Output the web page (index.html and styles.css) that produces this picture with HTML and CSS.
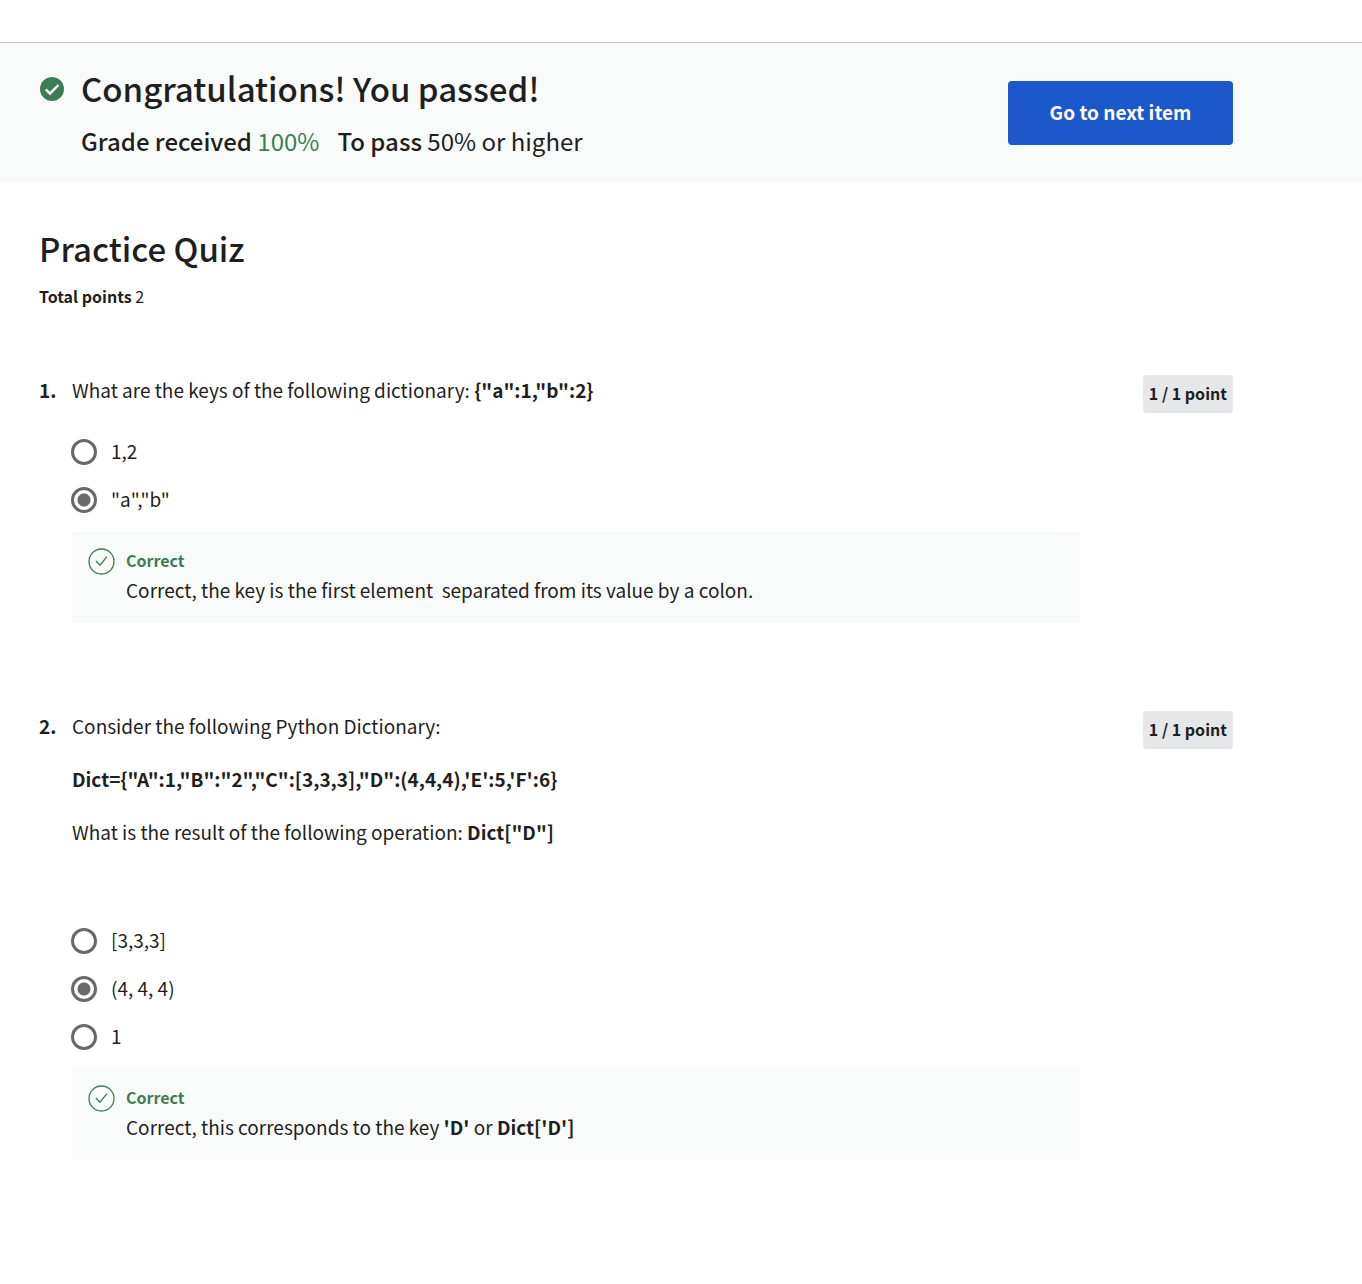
FILE: index.html
```html
<!DOCTYPE html>
<html lang="en">
<head>
<meta charset="utf-8">
<meta name="viewport" content="width=device-width, initial-scale=1">
<title>Practice Quiz</title>
<link rel="stylesheet" href="styles.css">
</head>
<body>
<header class="result">
  <svg class="result-icon" viewBox="0 0 24 24" aria-hidden="true">
    <circle cx="12" cy="12" r="12" fill="#3d7d54"/>
    <path d="M5.8 12.4l4.2 4.2 8.4-8.6" fill="none" stroke="#fff" stroke-width="2.4"/>
  </svg>
  <div class="result-text">
    <h1 class="title">Congratulations! You passed!</h1>
    <p class="grades">
      <span><strong>Grade received</strong> <span class="score">100%</span></span>
      <span><strong>To pass</strong> 50% or higher</span>
    </p>
  </div>
  <button class="next" type="button">Go to next item</button>
</header>
<main class="quiz">
  <h2 class="title">Practice Quiz</h2>
  <p class="total"><strong>Total points</strong> 2</p>

  <section class="question">
    <span class="number">1.</span>
    <div class="body">
      <div class="prompt">
        <p>What are the keys of the following dictionary: <strong>{"a":1,"b":2}</strong></p>
      </div>
      <div class="options">
        <label class="option"><input type="radio" name="q1"><span>1,2</span></label>
        <label class="option"><input type="radio" name="q1" checked><span>"a","b"</span></label>
      </div>
      <div class="feedback">
        <svg class="feedback-icon" viewBox="0 0 27 27" aria-hidden="true">
          <circle cx="13.5" cy="13.5" r="12.5"/>
          <path d="M7.9 13l4.1 4.2 6.9-8.6"/>
        </svg>
        <div>
          <p class="verdict">Correct</p>
          <p>Correct, the key is the first element &nbsp;separated from its value by a colon.</p>
        </div>
      </div>
    </div>
    <span class="points">1 / 1 point</span>
  </section>

  <section class="question">
    <span class="number">2.</span>
    <div class="body">
      <div class="prompt prompt-long">
        <p>Consider the following Python Dictionary:</p>
        <p><strong>Dict={"A":1,"B":"2","C":[3,3,3],"D":(4,4,4),'E':5,'F':6}</strong></p>
        <p>What is the result of the following operation: <strong>Dict["D"]</strong></p>
      </div>
      <div class="options">
        <label class="option"><input type="radio" name="q2"><span>[3,3,3]</span></label>
        <label class="option"><input type="radio" name="q2" checked><span>(4, 4, 4)</span></label>
        <label class="option"><input type="radio" name="q2"><span>1</span></label>
      </div>
      <div class="feedback">
        <svg class="feedback-icon" viewBox="0 0 27 27" aria-hidden="true">
          <circle cx="13.5" cy="13.5" r="12.5"/>
          <path d="M7.9 13l4.1 4.2 6.9-8.6"/>
        </svg>
        <div>
          <p class="verdict">Correct</p>
          <p>Correct, this corresponds to the key <strong>'D'</strong> or <strong>Dict['D']</strong></p>
        </div>
      </div>
    </div>
    <span class="points">1 / 1 point</span>
  </section>
</main>
</body>
</html>
```
FILE: styles.css
```css
* {
  box-sizing: border-box;
}

body {
  margin: 42px 0 0;
  background: #fff;
  color: #1f1f1f;
  font: 19px/30px "Source Sans Pro", "Noto Sans CJK JP", sans-serif;
}

h1,
h2,
p {
  margin: 0;
}

.title {
  font-size: 33px;
  font-weight: 500;
  line-height: 42px;
}

.result {
  display: flex;
  align-items: flex-start;
  padding: 24px 129px 24px 40px;
  border-top: 1px solid #c1c1c1;
  background: #f9fbfa;
}

.result-icon {
  width: 24px;
  height: 24px;
  margin: 10px 17px 0 0;
}

.result-text {
  flex: 1;
}

.grades {
  display: flex;
  gap: 18px;
  margin-top: 14px;
  font-size: 24px;
  line-height: 35px;
}

.grades strong {
  font-weight: 500;
}

.score {
  color: #3d7d54;
}

.next {
  width: 225px;
  height: 64px;
  margin-top: 14px;
  padding: 0 0 2px;
  border: 0;
  border-radius: 4px;
  background: #1d57cc;
  color: #fff;
  font: inherit;
  font-weight: 700;
}

.quiz {
  padding: 45px 129px 124px 39px;
}

.total {
  margin-top: 12px;
  font-size: 16px;
  line-height: 30px;
}

.question {
  display: flex;
  align-items: flex-start;
  margin-top: 64px;
}

.question + .question {
  margin-top: 88px;
}

.number {
  width: 33px;
  font-weight: 700;
}

.body {
  flex: 1;
}

.prompt {
  display: grid;
  gap: 23px;
  margin-bottom: 22px;
}

.prompt-long {
  margin-bottom: 69px;
}

.option {
  display: flex;
  align-items: center;
  gap: 14px;
  width: max-content;
  height: 48px;
}

.option input {
  appearance: none;
  width: 26px;
  height: 26px;
  margin: 2px 0 0 -1px;
  border: 3px solid #696969;
  border-radius: 50%;
}

.option input:checked {
  background: radial-gradient(circle, #696969 6px, #fff 7px);
}

.feedback {
  display: flex;
  gap: 11px;
  margin-top: 9px;
  padding: 13px 16px 18px;
  background: #f9fbfa;
}

.feedback-icon {
  width: 27px;
  height: 27px;
  margin-top: 3px;
  fill: none;
  stroke: #3d7d54;
  stroke-width: 1.3;
}

.verdict {
  color: #3d7d54;
  font-size: 16px;
  font-weight: 700;
}

.points {
  margin-left: 63px;
  padding: 3px 6px 5px;
  border-radius: 4px;
  background: #e5e7e8;
  font-size: 16px;
  font-weight: 700;
}
```
